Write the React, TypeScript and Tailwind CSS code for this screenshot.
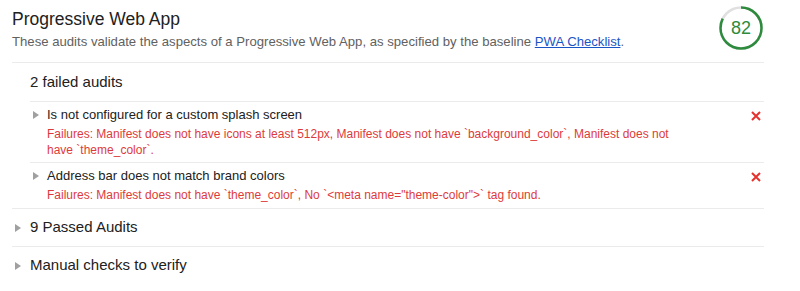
import { ReactNode } from "react";

type Failed = {
  title: string;
  failures: string;
};

const failedAudits: Failed[] = [
  {
    title: "Is not configured for a custom splash screen",
    failures:
      "Failures: Manifest does not have icons at least 512px, Manifest does not have `background_color`, Manifest does not have `theme_color`.",
  },
  {
    title: "Address bar does not match brand colors",
    failures:
      'Failures: Manifest does not have `theme_color`, No `<meta name="theme-color">` tag found.',
  },
];

function Arrow() {
  return (
    <svg width="6" height="8" viewBox="0 0 6 8" className="shrink-0">
      <path d="M0 0 L6 4 L0 8 Z" fill="#a0a0a0" />
    </svg>
  );
}

function Gauge({ score }: { score: number }) {
  const r = 20.5;
  const c = 2 * Math.PI * r;
  return (
    <div className="relative w-[46px] h-[46px] shrink-0">
      <svg width="46" height="46" viewBox="0 0 46 46" className="-rotate-90">
        <circle cx="23" cy="23" r={r} fill="none" stroke="#e0e0e0" strokeWidth="2.5" />
        <circle
          cx="23"
          cy="23"
          r={r}
          fill="none"
          stroke="#2e8b3e"
          strokeWidth="2.5"
          strokeDasharray={`${(c * score) / 100} ${c}`}
        />
      </svg>
      <div className="absolute inset-0 flex items-center justify-center text-[18px] text-[#2e8b3e]">
        {score}
      </div>
    </div>
  );
}

function CollapsedGroup({ children }: { children: ReactNode }) {
  return (
    <div className="border-t border-[#ebebeb] h-[38px] flex items-center gap-[9px] pl-[3px]">
      <Arrow />
      <span className="text-[15px] text-[#212121]">{children}</span>
    </div>
  );
}

export default function App() {
  return (
    <div className="bg-white w-[800px] h-[291px] pl-3 pr-[36px] font-['Liberation_Sans',Arial,sans-serif]">
      <div className="flex justify-between items-start h-[62px] pt-[5px]">
        <div className="pt-[2px]">
          <div className="text-[17.5px] leading-[24px] text-[#212121]">Progressive Web App</div>
          <div className="text-[13.15px] leading-[18px] text-[#616161] mt-[2px]">
            These audits validate the aspects of a Progressive Web App, as specified by the
            baseline{" "}
            <a href="#" className="text-[#1a55c6] underline">
              PWA Checklist
            </a>
            .
          </div>
        </div>
        <Gauge score={82} />
      </div>

      <div className="border-t border-[#ebebeb] pl-[18px]">
        <div className="h-[38px] flex items-center text-[15px] text-[#212121]">2 failed audits</div>
        {failedAudits.map((a) => (
          <div
            key={a.title}
            className="border-t border-[#ebebeb] flex pt-[3px] pb-[4px] last:pb-[5px] pr-[3px]"
          >
            <div className="h-[20px] flex items-center pl-[3px] w-[17px]">
              <Arrow />
            </div>
            <div className="flex-1 pr-[80px]">
              <div className="text-[13px] leading-[20px] text-[#212121]">{a.title}</div>
              <div className="text-[12px] leading-[16px] text-[#dd3b3b] mt-[1px]">{a.failures}</div>
            </div>
            <div className="h-[21px] flex items-center">
              <svg width="10" height="10" viewBox="0 0 10 10">
                <path d="M1 1 L9 9 M9 1 L1 9" stroke="#e5322d" strokeWidth="2" />
              </svg>
            </div>
          </div>
        ))}
      </div>

      <CollapsedGroup>9 Passed Audits</CollapsedGroup>
      <CollapsedGroup>Manual checks to verify</CollapsedGroup>
    </div>
  );
}
